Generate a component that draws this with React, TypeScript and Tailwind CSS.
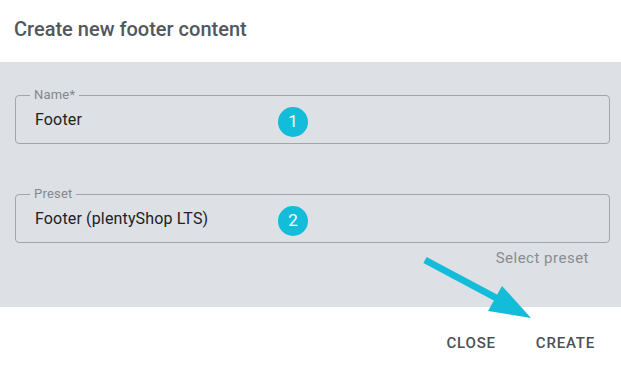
import React from "react";

const font = { fontFamily: "Roboto, 'Noto Sans', sans-serif" };

function Field({ label, value, badge }: { label: string; value: string; badge: string }) {
  return (
    <div className="relative h-[49px] rounded-[4px] border border-[#a2a5a9] flex items-center pl-[19px]">
      {/* notched label */}
      <span className="absolute left-[14px] top-[-8px] px-[4px] bg-[#dde0e4] text-[13px] leading-[14px] tracking-[0.2px] text-[#85888c]">
        {label}
      </span>
      <span className="text-[16px] tracking-[0.15px] text-[#202225]">{value}</span>
      <span className="absolute left-[262px] top-[11px] w-[30px] h-[30px] rounded-full bg-[#13bcd9] text-white text-[17px] flex items-center justify-center">
        {badge}
      </span>
    </div>
  );
}

export default function App() {
  return (
    <div className="relative w-[621px] h-[374px] bg-white overflow-hidden" style={font}>
      {/* header */}
      <div className="h-[62px] flex items-center pl-[14px] pb-[4px]">
        <h1 className="text-[20px] font-medium text-[#52575c]">Create new footer content</h1>
      </div>

      {/* body */}
      <div className="h-[245px] bg-[#dde0e4] pl-[15px] pr-[11px] pt-[33px] flex flex-col">
        <Field label="Name*" value="Footer" badge="1" />
        <div className="h-[50px]" />
        <Field label="Preset" value="Footer (plentyShop LTS)" badge="2" />
        <div className="flex justify-end mt-[5px] pr-[21px]">
          <span className="text-[15px] leading-[20px] tracking-[0.5px] text-[#898c90]">Select preset</span>
        </div>
      </div>

      {/* footer */}
      <div className="h-[67px] flex items-center justify-end pt-[5px] pr-[26px] gap-[40px]">
        <button className="text-[15px] font-medium tracking-[0.8px] text-[#4b5056]">CLOSE</button>
        <button className="text-[15px] font-medium tracking-[0.8px] text-[#4b5056]">CREATE</button>
      </div>

      {/* annotation arrow */}
      <svg className="absolute left-0 top-0 pointer-events-none" width="621" height="374" viewBox="0 0 621 374">
        <line x1="425" y1="260" x2="500" y2="300" stroke="#13bcd9" strokeWidth="7" strokeLinecap="butt" />
        <polygon points="531,318 502,286 488,311" fill="#13bcd9" />
      </svg>
    </div>
  );
}
